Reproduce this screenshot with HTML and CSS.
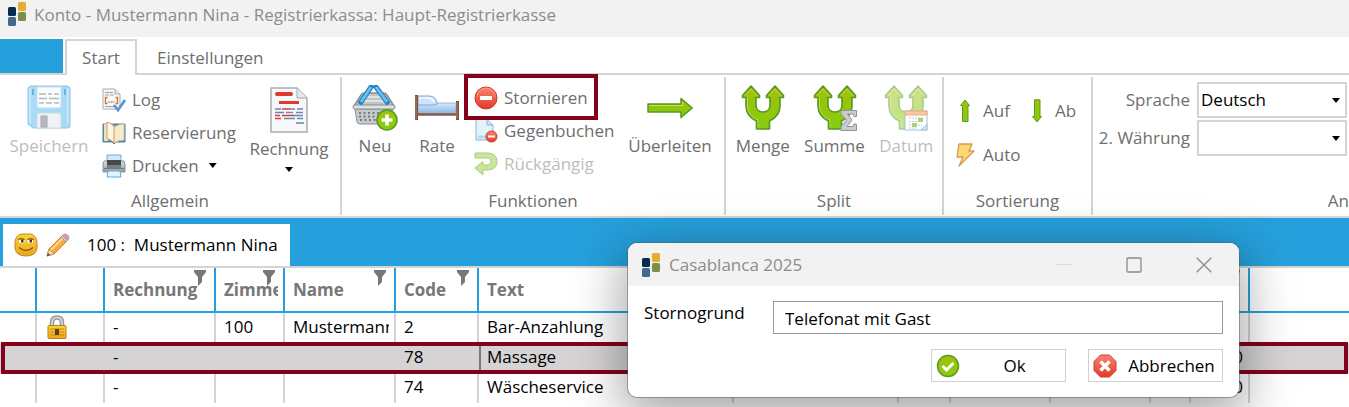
FILE: index.html
```html
<!DOCTYPE html>
<html lang="de">
<head>
    <meta charset="UTF-8">
    <meta name="viewport" content="width=device-width, initial-scale=1.0">
    <title>Konto - Mustermann Nina</title>
    <link rel="stylesheet" href="styles.css">
</head>
<body>
    <!-- Shared gradients and symbols -->
    <svg class="sprite" aria-hidden="true">
        <defs>
            <linearGradient id="green" x1="0" y1="0" x2="0" y2="1">
                <stop offset="0" stop-color="#a3bf08"/><stop offset="1" stop-color="#84cc12"/>
            </linearGradient>
            <linearGradient id="red" x1="0" y1="0" x2="0" y2="1">
                <stop offset="0" stop-color="#fa8372"/><stop offset="1" stop-color="#e23a26"/>
            </linearGradient>
            <linearGradient id="gold" x1="0" y1="0" x2="0" y2="1">
                <stop offset="0" stop-color="#fdd23c"/><stop offset="1" stop-color="#eba51c"/>
            </linearGradient>
            <linearGradient id="blue" x1="0" y1="0" x2="0" y2="1">
                <stop offset="0" stop-color="#d3ecfa"/><stop offset="1" stop-color="#86b3e6"/>
            </linearGradient>
            <linearGradient id="grey" x1="0" y1="0" x2="0" y2="1">
                <stop offset="0" stop-color="#dcdfe1"/><stop offset="1" stop-color="#93999d"/>
            </linearGradient>
        </defs>
        <symbol id="logo" viewBox="0 0 18 24">
            <rect x="0" y="5" width="8" height="9" rx="1.5" fill="#042c50"/>
            <rect x="10" y="0" width="8" height="9" rx="1.5" fill="#e6ae2e"/>
            <rect x="0" y="15" width="8" height="9" rx="1.5" fill="#44698c"/>
            <rect x="10" y="10" width="8" height="9" rx="1.5" fill="#7b8f49"/>
        </symbol>
        <symbol id="filter" viewBox="0 0 12 16">
            <path d="M0 0h12v2L8 7v5l-4 4V7L0 2z" fill="#777"/>
        </symbol>
        <symbol id="split" viewBox="0 0 44 46">
            <path d="M15.500 44V36C9 33 5 28 5 21V12.500H1.500V10.500L10 1l8.500 9.500v2H15V20C15 24.500 18 27 22 27S29 24.500 29 20V12.500H25.500V10.500L34 1l8.500 9.500v2H39V21C39 28 35 33 28.500 36V44Z" fill="url(#green)" stroke="#529a20" stroke-width="1.600" stroke-linejoin="round"/>
            <path d="M17 42.500V35C10 32 6.500 27 6.500 21V11.500M4 11l6-7 6 7M28 11l6-7 6 7" fill="none" stroke="#cbe06a" stroke-width="1" opacity=".7"/>
        </symbol>
        <symbol id="stop" viewBox="0 0 24 24">
            <circle cx="12" cy="12" r="11" fill="url(#red)" stroke="#cf3a2a"/>
            <path d="M3 11a9 9 0 0 1 18 0" fill="none" stroke="#ffb0a4" opacity=".6"/>
            <rect x="6" y="10" width="12" height="4" rx=".5" fill="#fff"/>
        </symbol>
    </svg>

    <header class="titlebar">
        <svg class="logo"><use href="#logo"/></svg>
        <span>Konto - Mustermann Nina - Registrierkassa: Haupt-Registrierkasse</span>
    </header>

    <nav class="tabs">
        <a class="tab-file" href="#" aria-label="Datei"></a>
        <a class="tab tab-active" href="#">Start</a>
        <a class="tab" href="#">Einstellungen</a>
    </nav>

    <div class="ribbon">
        <section class="group group-general">
            <div class="group-body">
                <button class="big" disabled>
                    <svg width="44" height="46" viewBox="0 0 44 46">
                        <path d="M3 1h38l2 2v38q0 2-2 2H6l-5-4V3z" fill="#a9dbf6" stroke="#8bc4e6"/>
                        <path d="M2 38v-35h2v36zM40 3h2v36h-2z" fill="#c4e8fa"/>
                        <path d="M10 2h24v19q0 2-2 2H12q-2 0-2-2z" fill="#fafcfd" stroke="#c6dfec"/>
                        <path d="M12 9h7m2 0h4m2 0h5M12 13.500h8m2 0h10M12 18h5m2 0h6m2 0h5" stroke="#b5b8ba" stroke-width="1.500"/>
                        <path d="M10 43V30q0-2 2-2h20q2 0 2 2v13z" fill="#f0f3f5" stroke="#c9dbe6"/>
                        <rect x="14" y="31" width="6" height="11" fill="#b5b9bd" stroke="#a3a8ac"/>
                        <path d="M5 4h2v6H5zM37 4h2v6h-2z" fill="#6fb1d8"/>
                    </svg>
                    <span>Speichern</span>
                </button>
                <div class="stack">
                    <button class="small">
                        <svg width="24" height="24" viewBox="0 0 24 24">
                            <path d="M1 1h12l5 5v15H1z" fill="#f7f8f9" stroke="#a5abb0"/>
                            <path d="M13 1v5h5" fill="#e5e9ec" stroke="#a5abb0"/>
                            <path d="M3 4.500h8M3 7h4m1 0h4M3 18.500h9" stroke="#9aa0a8"/>
                            <path d="M5.500 9.500H3.500v6h2M13.500 9.500h2v6h-2M6.500 14h1.500m1 0h1.500m1 0h1" fill="none" stroke="#cf7741" stroke-width="1.400"/>
                            <path d="M12 17l4 5L23 12" fill="none" stroke="#5f97cf" stroke-width="2.800"/>
                        </svg>
                        <span>Log</span>
                    </button>
                    <button class="small">
                        <svg width="24" height="24" viewBox="0 0 24 24">
                            <path d="M1 3h22v18H14l-2 2-2-2H1z" fill="#5f93b6" stroke="#4d81a6"/>
                            <path d="M2 3h4v17H2z" fill="#f7dfb4"/>
                            <path d="M12 6q5-3 10-3v16q-6 0-10 3z" fill="#f8ebcd" stroke="#dcc18a" stroke-width=".8"/>
                            <path d="M5 .8q6 2 7 5V22q-2-3-7-4.500z" fill="#fff5e0" stroke="#cda468"/>
                        </svg>
                        <span>Reservierung</span>
                    </button>
                    <button class="small">
                        <svg width="24" height="24" viewBox="0 0 24 24">
                            <path d="M5 1h14v8H5z" fill="#cfeaff" stroke="#6aade0"/>
                            <path d="M2 7h20l1 3v8H1v-8z" fill="url(#grey)" stroke="#8c9195"/>
                            <path d="M5 6h14v5H5z" fill="#44494d"/>
                            <path d="M5 11h14v3H5z" fill="#787d81"/>
                            <path d="M2 14.500h20" stroke="#74797d"/>
                            <path d="M6 17h12l1 6H5z" fill="#e3f4ff" stroke="#5ea7dc"/>
                        </svg>
                        <span>Drucken</span>
                        <i class="caret"></i>
                    </button>
                </div>
                <button class="big">
                    <svg width="40" height="49" viewBox="0 0 40 49">
                        <path d="M2 3h26l10 10v34H2z" fill="#f6f8f9" stroke="#a6adb2" stroke-width="1.500"/>
                        <path d="M28 3v10h10" fill="#e5e9ec" stroke="#a6adb2"/>
                        <rect x="6" y="7" width="18" height="4" rx="2" fill="#dd3a31"/>
                        <rect x="10" y="16" width="20" height="3" fill="#dd3a31"/>
                        <path d="M6 24h6m9 0h5m2 0h6M6 27.500h9m2 0h7m3 0h7M24 30.500h10M15 33.500h11m2 0h6M27 38h8" stroke="#6689ae" stroke-width="1.500"/>
                        <path d="M13 24h8M6 30.500h5m2 0h12M6 33.500h6" stroke="#dd3a31" stroke-width="1.500"/>
                    </svg>
                    <span>Rechnung</span>
                    <i class="caret"></i>
                </button>
            </div>
            <h2>Allgemein</h2>
        </section>

        <section class="group group-functions">
            <div class="group-body">
                <button class="big">
                    <svg width="46" height="46" viewBox="0 0 46 46">
                        <path d="M9 10q1-2 4-2h18q3 0 4 2l7 11H2z" fill="#c1c5c8" stroke="#878d91" stroke-width="1.500"/>
                        <path d="M11 12h22M8 16h28" stroke="#e9ebec" stroke-width="1.500"/>
                        <path d="M3 24h38l-2 13q-.5 2-3 2H8q-2.500 0-3-2z" fill="#c6cacc" stroke="#8a9094"/>
                        <path d="M7 28h30M7 31.500h30M8 35h27" stroke="#747a7d" stroke-width="2" stroke-dasharray="2 2.500"/>
                        <rect x="1" y="20" width="42" height="4" rx="2" fill="#dfe2e3" stroke="#878d91"/>
                        <path d="M19 2L9 17M24 2l11 15" stroke="#2583c4" stroke-width="5" stroke-linecap="square"/>
                        <path d="M19 2L9 17M24 2l11 15" stroke="#6cc3f2" stroke-width="2.600"/>
                        <circle cx="35" cy="35" r="10" fill="url(#green)" stroke="#529a20" stroke-width="1.500"/>
                        <path d="M35 29.500v11M29.500 35h11" stroke="#fff" stroke-width="3.500"/>
                    </svg>
                    <span>Neu</span>
                </button>
                <button class="big">
                    <svg width="46" height="46" viewBox="0 0 46 46">
                        <path d="M4 18h38v11H4z" fill="url(#blue)" stroke="#7ba3cd" stroke-width=".7"/>
                        <path d="M4 11h12q7 1 7 8-1 1-3 1H4z" fill="#cfe5f7" stroke="#82a9cf"/>
                        <path d="M5 13h10q4 1 5 4" stroke="#f4faff" stroke-width="1.500" fill="none"/>
                        <path d="M3 29.500h40" stroke="#8a5a44" stroke-width="2.500"/>
                        <path d="M2.500 10v25M43.500 16v19" stroke="#7d4f3c" stroke-width="3"/>
                        <path d="M2 11v23M43 17v17" stroke="#b8846b"/>
                    </svg>
                    <span>Rate</span>
                </button>
                <div class="stack">
                    <button class="small marked">
                        <svg width="24" height="24"><use href="#stop"/></svg>
                        <span>Stornieren</span>
                    </button>
                    <button class="small">
                        <svg width="24" height="24" viewBox="0 0 24 24">
                            <path d="M2 0h11l6 6v15H2z" fill="#e4f3fb" stroke="#85b7d6"/>
                            <path d="M13 0v6h6" fill="#c9e4f5" stroke="#85b7d6"/>
                            <path d="M4 18h9" stroke="#b8d9ed" stroke-width="3"/>
                            <circle cx="17.500" cy="17.500" r="5.500" fill="url(#red)" stroke="#cf3a2a"/>
                            <path d="M14 17.500h7" stroke="#fff" stroke-width="2"/>
                        </svg>
                        <span>Gegenbuchen</span>
                    </button>
                    <button class="small" disabled>
                        <svg width="24" height="24" viewBox="0 0 24 24">
                            <path d="M1 1h13q9 .5 9 8.500 0 8-9 8.500H9v5L.8 16 9 9.500V13h5q3-.3 3-3.500T14 6H1z" fill="#cbe59a" stroke="#a8cc82" stroke-linejoin="round"/>
                        </svg>
                        <span>Rückgängig</span>
                    </button>
                </div>
                <button class="big">
                    <svg width="46" height="46" viewBox="0 0 46 46">
                        <path d="M1 19h33v-5.500L45.200 23 34 32.500V27H1z" fill="url(#green)" stroke="#529a20" stroke-width="1.500" stroke-linejoin="round"/>
                        <path d="M2.500 20.500H35.500V17" fill="none" stroke="#c9e45c"/>
                    </svg>
                    <span>Überleiten</span>
                </button>
            </div>
            <h2>Funktionen</h2>
        </section>

        <section class="group group-split">
            <div class="group-body">
                <button class="big">
                    <svg width="44" height="46"><use href="#split"/></svg>
                    <span>Menge</span>
                </button>
                <button class="big">
                    <svg width="44" height="46" viewBox="0 0 44 46">
                        <use href="#split"/>
                        <path d="M28 25.500h15.500v6H41l-1-2.500h-5.500l4.500 6-5 6.500h6l1-2.500h2.500v6.500H28v-4l5.500-6.500-5.500-6z" fill="#c9cccf" stroke="#8f9498"/>
                    </svg>
                    <span>Summe</span>
                </button>
                <button class="big" disabled>
                    <svg width="44" height="46" viewBox="0 0 44 46">
                        <use href="#split" opacity=".5"/>
                        <path d="M21 26h22v19H21z" fill="#fff" stroke="#9fc3dd"/>
                        <path d="M21 26h22v4H21z" fill="#fbc9a0" stroke="#f0a983"/>
                        <path d="M25 33h15M25 36.500h15M25 40h13M25 43h9" stroke="#c8c8c8" stroke-dasharray="2 1"/>
                        <path d="M34 33h5v4h-5zM28 38h5v4h-5z" fill="#a7d37f"/>
                        <path d="M37 45l6-6v6z" fill="#d5e6f2" stroke="#9fc3dd"/>
                    </svg>
                    <span>Datum</span>
                </button>
            </div>
            <h2>Split</h2>
        </section>

        <section class="group group-sort">
            <div class="group-body">
                <button class="small">
                    <svg width="20" height="24" viewBox="0 0 20 24">
                        <path d="M7.500 22.500V6.500H5.500L10 1l4.500 5.500H13v16z" fill="url(#green)" stroke="#5c9c1c"/>
                    </svg>
                    <span>Auf</span>
                </button>
                <button class="small">
                    <svg width="20" height="24" viewBox="0 0 20 24">
                        <path d="M7.500 .8v16.700H5.500L10 23l4.500-5.500H13V.8z" fill="url(#green)" stroke="#5c9c1c"/>
                    </svg>
                    <span>Ab</span>
                </button>
                <button class="small">
                    <svg width="20" height="24" viewBox="0 0 20 24">
                        <path d="M4 1h13l-3 7h5L4 23l4-9H2z" fill="#fbd871" stroke="#d39a56" stroke-width="1.300" stroke-linejoin="round"/>
                    </svg>
                    <span>Auto</span>
                </button>
            </div>
            <h2>Sortierung</h2>
        </section>

        <section class="group group-view">
            <div class="group-body">
                <label for="language">Sprache</label>
                <div class="select-box">
                    <select id="language"><option>Deutsch</option></select>
                </div>
                <label for="currency">2. Währung</label>
                <div class="select-box">
                    <select id="currency"><option></option></select>
                </div>
            </div>
            <h2>An</h2>
        </section>
    </div>

    <div class="doc-tabs">
        <a class="doc-tab" href="#">
            <svg width="24" height="24" viewBox="0 0 24 24">
                <path d="M7 1h10q6 2 6 9v5q-1 8-11 8T1 15v-5q0-7 6-9z" fill="url(#gold)" stroke="#c08418"/>
                <path d="M4 6.500q3-2 6.500 0M13.500 6.500q3-2 6.500 0" stroke="#6d4a0b" fill="none"/>
                <path d="M5 7h5.500v2.500q-3 1.500-5.500 0zM13.500 7H19v2.500q-2.500 1.500-5.500 0z" fill="#fff"/>
                <path d="M7 6.500h2.500v3H7zM15.500 6.500H18v3h-2.500z" fill="#4b3a18"/>
                <path d="M5 14.500q7 6 14 0" stroke="#8a5c10" stroke-width="1.300" fill="none"/>
            </svg>
            <svg width="24" height="24" viewBox="0 0 24 24">
                <path d="M1 23l2-7L16 3l5 5L8 21z" fill="#f7a93b" stroke="#cf7b1e"/>
                <path d="M5 17L17.500 4.500" stroke="#ffd791" stroke-width="2"/>
                <path d="M1 23l2-7 5 5z" fill="#f4dcb5" stroke="#b9945f"/>
                <path d="M1 23l1-3 2 2z" fill="#444"/>
                <path d="M15 4l5 5 1.500-1.500-5-5z" fill="#c4cbd2" stroke="#8e979f" stroke-width=".7"/>
                <path d="M17 2q2-2 4.500 0t1 4.500L21.500 7.500l-5-5z" fill="#dc9ac0" stroke="#b77ba0" stroke-width=".7"/>
            </svg>
            <span>100 :&nbsp; Mustermann Nina</span>
        </a>
    </div>

    <table class="bookings">
        <colgroup>
            <col class="w-mark"><col class="w-lock"><col class="w-wide"><col class="w-room"><col class="w-wide"><col class="w-code"><col class="w-text"><col class="w-info"><col class="w-flag"><col class="w-price"><col class="w-price"><col class="w-tax"><col class="w-sum"><col>
        </colgroup>
        <thead>
            <tr>
                <th></th>
                <th></th>
                <th><div>Rechnung</div><svg class="filter"><use href="#filter"/></svg></th>
                <th><div>Zimmer</div><svg class="filter"><use href="#filter"/></svg></th>
                <th><div>Name</div><svg class="filter"><use href="#filter"/></svg></th>
                <th><div>Code</div><svg class="filter"><use href="#filter"/></svg></th>
                <th><div>Text</div></th>
                <th></th>
                <th></th>
                <th></th>
                <th></th>
                <th></th>
                <th><svg class="filter"><use href="#filter"/></svg></th>
                <th></th>
            </tr>
        </thead>
        <tbody>
            <tr>
                <td></td>
                <td class="lock">
                    <svg width="20" height="24" viewBox="0 0 20 24">
                        <path d="M5 12V7.500q0-5 5-5t5 5V12" fill="none" stroke="#92989c" stroke-width="4.500"/>
                        <path d="M5 12V7.500q0-5 5-5t5 5V12" fill="none" stroke="#cdd2d5" stroke-width="2"/>
                        <rect x="1" y="10.500" width="18" height="13" rx="1" fill="url(#gold)" stroke="#bd7f13"/>
                        <path d="M3 14h14M3 17h14M3 20h14" stroke="#c48618"/>
                        <rect x="8" y="14" width="4" height="6" fill="#5d400b"/>
                    </svg>
                </td>
                <td><div>-</div></td>
                <td><div>100</div></td>
                <td><div>Mustermann</div></td>
                <td><div>2</div></td>
                <td><div>Bar-Anzahlung</div></td>
                <td></td><td></td><td></td><td></td><td></td><td></td><td></td>
            </tr>
            <tr class="selected">
                <td></td>
                <td></td>
                <td><div>-</div></td>
                <td></td>
                <td></td>
                <td><div>78</div></td>
                <td class="focused"><div>Massage</div></td>
                <td></td><td></td><td></td><td></td><td></td>
                <td class="sum"><div>0</div></td>
                <td></td>
            </tr>
            <tr>
                <td></td>
                <td></td>
                <td><div>-</div></td>
                <td></td>
                <td></td>
                <td><div>74</div></td>
                <td><div>Wäscheservice</div></td>
                <td></td><td></td><td></td><td></td><td></td>
                <td class="sum"><div>0</div></td>
                <td></td>
            </tr>
        </tbody>
    </table>

    <form class="dialog" role="dialog" aria-labelledby="dialogTitle">
        <div class="dialog-bar">
            <svg class="logo"><use href="#logo"/></svg>
            <span id="dialogTitle">Casablanca 2025</span>
            <button type="button" class="window-button" aria-label="Minimieren" disabled>
                <svg width="16" height="16" viewBox="0 0 16 16"><path d="M0 7.500h16" stroke="#dcdcdc"/></svg>
            </button>
            <button type="button" class="window-button" aria-label="Maximieren">
                <svg width="16" height="16" viewBox="0 0 16 16"><rect x="1" y="1" width="14" height="14" rx="1" fill="none" stroke="#8a8a8a" stroke-width="1.300"/></svg>
            </button>
            <button type="button" class="window-button" aria-label="Schließen">
                <svg width="16" height="16" viewBox="0 0 16 16"><path d="M.7 .7l14.600 14.600M15.300 .7L.7 15.300" stroke="#8a8a8a" stroke-width="1.300"/></svg>
            </button>
        </div>
        <div class="dialog-row">
            <label for="reason">Stornogrund</label>
            <input id="reason" type="text" value="Telefonat mit Gast">
        </div>
        <div class="dialog-actions">
            <button type="button">
                <svg width="24" height="24" viewBox="0 0 24 24">
                    <circle cx="12" cy="12" r="10.500" fill="url(#green)" stroke="#5a9c1e" stroke-width="1.500"/>
                    <path d="M6.500 12l4 4 7-7" fill="none" stroke="#fff" stroke-width="3"/>
                </svg>
                <span>Ok</span>
            </button>
            <button type="button">
                <svg width="24" height="24" viewBox="0 0 24 24">
                    <path d="M7.500 1h9L23 7.500v9L16.500 23h-9L1 16.500v-9z" fill="url(#red)" stroke="#cb4435"/>
                    <path d="M7.500 7.500l9 9M16.500 7.500l-9 9" stroke="#fff" stroke-width="3.500"/>
                </svg>
                <span>Abbrechen</span>
            </button>
        </div>
    </form>
</body>
</html>
```

FILE: styles.css
```css
*,
*::before,
*::after {
    box-sizing: border-box;
}
body {
    margin: 0;
    background-color: #fff;
    color: #000;
    font-family: "Open Sans", "Noto Sans", sans-serif;
    font-size: 17px;
    line-height: 24px;
    overflow: hidden;
}
a {
    color: inherit;
    text-decoration: none;
}
button {
    padding: 0;
    border: none;
    background: none;
    color: inherit;
    font: inherit;
}
svg {
    display: block;
    flex: none;
}
.sprite {
    position: absolute;
    width: 0;
    height: 0;
}
.logo {
    width: 18px;
    height: 24px;
}
.titlebar {
    display: flex;
    gap: 8px;
    height: 37px;
    padding: 2px 8px;
    background-color: #f2f2f2;
    color: #8c8c8c;
}
.titlebar span {
    padding-top: 1px;
}

/* Ribbon */
.tabs {
    display: flex;
    height: 38px;
    padding-top: 2px;
    border-bottom: 2px solid #d4d4d4;
    color: #6e6e6e;
}
.tab-file {
    width: 63px;
    margin-right: 2px;
    background-color: #26a0dc;
}
.tab {
    padding: 7px 20px 0;
}
.tab-active {
    height: 36px;
    padding: 5px 0 0;
    width: 72px;
    text-align: center;
    border: 2px solid #d4d4d4;
    border-bottom: none;
    background-color: #fff;
}
.ribbon {
    display: flex;
    height: 143px;
    padding: 2px 0 1px;
    border-bottom: 2px solid #d4d4d4;
    color: #6e6e6e;
}
.group {
    display: flex;
    flex-direction: column;
    flex: none;
    border-right: 2px solid #d4d4d4;
}
.group h2 {
    margin: 0 0 2px;
    font-size: 17px;
    font-weight: normal;
    text-align: center;
}
.group-body {
    display: flex;
    flex: 1;
}
.group-general {
    width: 342px;
}
.group-functions {
    width: 384px;
}
.group-split {
    width: 218px;
}
.group-sort {
    width: 149px;
}
.group-view {
    flex: 1;
    border-right: none;
}
.big {
    display: flex;
    flex-direction: column;
    align-items: center;
    justify-content: flex-start;
    padding-top: 8px;
    white-space: nowrap;
}
.big span {
    margin-top: 3px;
}
.big .caret {
    margin-top: 6px;
}
.small {
    display: flex;
    align-items: center;
    gap: 6px;
    height: 33px;
    white-space: nowrap;
}
.stack {
    padding-top: 6px;
}
button:disabled {
    color: #bdbdbd;
}
.caret {
    width: 8px;
    height: 5px;
    background-color: #000;
    clip-path: polygon(0 0, 100% 0, 50% 100%);
}
.small .caret {
    margin-left: 4px;
}
.group-general .big {
    width: 98px;
}
.group-general .stack {
    width: 142px;
    padding-left: 4px;
}
.group-functions .big {
    width: 62px;
}
.group-functions .big:first-child {
    margin-left: 2px;
}
.group-functions .stack {
    width: 156px;
    padding-top: 4px;
    padding-left: 6px;
}
.group-functions .big:last-child {
    width: 92px;
}
.group-split .group-body {
    padding-left: 1px;
}
.group-split .big {
    width: 72px;
}
.group-sort .group-body {
    display: grid;
    grid-template-columns: 72px 1fr;
    grid-auto-rows: 33px;
    row-gap: 11px;
    padding: 17px 0 0 11px;
}
.group-sort .small {
    gap: 8px;
}
.group-view .group-body {
    display: grid;
    grid-template-columns: 1fr 150px;
    grid-auto-rows: 36px;
    align-items: center;
    gap: 2px 7px;
    padding: 5px 2px 0 0;
    text-align: right;
}
.group-view h2 {
    text-align: right;
}
.marked {
    position: relative;
}
.marked::after {
    content: "";
    position: absolute;
    z-index: 1;
    top: -7px;
    left: -10px;
    width: 134px;
    height: 46px;
    border: 4px solid #85001a;
}
.select-box {
    position: relative;
    height: 36px;
}
.select-box select {
    width: 100%;
    height: 100%;
    padding: 0 2px;
    border: 2px solid #d4d4d4;
    border-radius: 0;
    background-color: #fff;
    color: #000;
    font: inherit;
    appearance: none;
}
.select-box::after {
    content: "";
    position: absolute;
    top: 16px;
    right: 7px;
    width: 8px;
    height: 5px;
    background-color: #000;
    clip-path: polygon(0 0, 100% 0, 50% 100%);
}

/* Open accounts */
.doc-tabs {
    display: flex;
    height: 50px;
    padding: 6px 3px 0;
    border-bottom: 2px solid #d4d4d4;
    background-color: #26a0dc;
}
.doc-tab {
    display: flex;
    align-items: center;
    gap: 8px;
    width: 287px;
    padding: 0 11px;
    background-color: #fff;
    white-space: nowrap;
}
.doc-tab span {
    padding-left: 9px;
}

/* Bookings */
.bookings {
    width: 100%;
    table-layout: fixed;
    border-collapse: separate;
    border-spacing: 0;
}
.w-mark { width: 37px; }
.w-lock { width: 68px; }
.w-wide { width: 111px; }
.w-room { width: 69px; }
.w-code { width: 83px; }
.w-text { width: 255px; }
.w-info { width: 165px; }
.w-flag { width: 52px; }
.w-price { width: 100px; }
.w-tax { width: 40px; }
.w-sum { width: 59px; }
.bookings th,
.bookings td {
    padding: 0 5px 2px 8px;
    text-align: left;
    white-space: nowrap;
}
.bookings th {
    position: relative;
    height: 45px;
    padding-bottom: 0;
    border-right: 2px solid #26a0dc;
    border-bottom: 2px solid #26a0dc;
    color: #777;
}
.bookings td {
    height: 30px;
    border-right: 2px solid #d4d4d4;
}
.bookings th:last-child,
.bookings td:last-child {
    border-right: none;
}
.bookings th div,
.bookings td div {
    overflow: hidden;
}
.bookings .lock {
    padding-left: 10px;
}
.bookings .sum {
    text-align: right;
}
.filter {
    position: absolute;
    top: 2px;
    right: 8px;
    width: 12px;
    height: 16px;
}
.bookings .selected {
    position: relative;
}
.bookings .selected td {
    border-right-color: #d5d3d4;
    background-color: #d5d3d4;
}
.bookings .selected .focused {
    border-left: 2px solid #777;
    padding-left: 6px;
}
.selected td:first-child::after {
    content: "";
    position: absolute;
    inset: -1px 1px;
    border: 4px solid #85001a;
}

/* Cancel dialog */
.dialog {
    position: absolute;
    top: 243px;
    right: 110px;
    width: 611px;
    border-radius: 9px;
    background-color: #fff;
    box-shadow: 0 0 0 1px rgba(90, 90, 90, 0.5), 0 14px 50px 6px rgba(0, 0, 0, 0.35);
    overflow: hidden;
}
.dialog-bar {
    display: flex;
    align-items: center;
    height: 43px;
    padding-left: 14px;
    background-color: #f2f2f2;
    color: #8c8c8c;
}
.dialog-bar span {
    flex: 1;
    padding-left: 9px;
}
.window-button {
    display: flex;
    align-items: center;
    justify-content: center;
    width: 70px;
    height: 43px;
}
.dialog-row {
    display: flex;
    padding: 15px 16px;
}
.dialog-row label {
    width: 129px;
}
.dialog-row input {
    flex: 1;
    height: 33px;
    padding: 2px 11px 0;
    border: 1px solid #999;
    font: inherit;
}
.dialog-actions {
    display: flex;
    justify-content: flex-end;
    gap: 22px;
    padding: 0 16px 15px;
}
.dialog-actions button {
    display: flex;
    align-items: center;
    width: 135px;
    height: 33px;
    padding: 0 4px;
    border: 1px solid #d0d0d0;
}
.dialog-actions span {
    flex: 1;
    padding-left: 8px;
    text-align: center;
}
```
